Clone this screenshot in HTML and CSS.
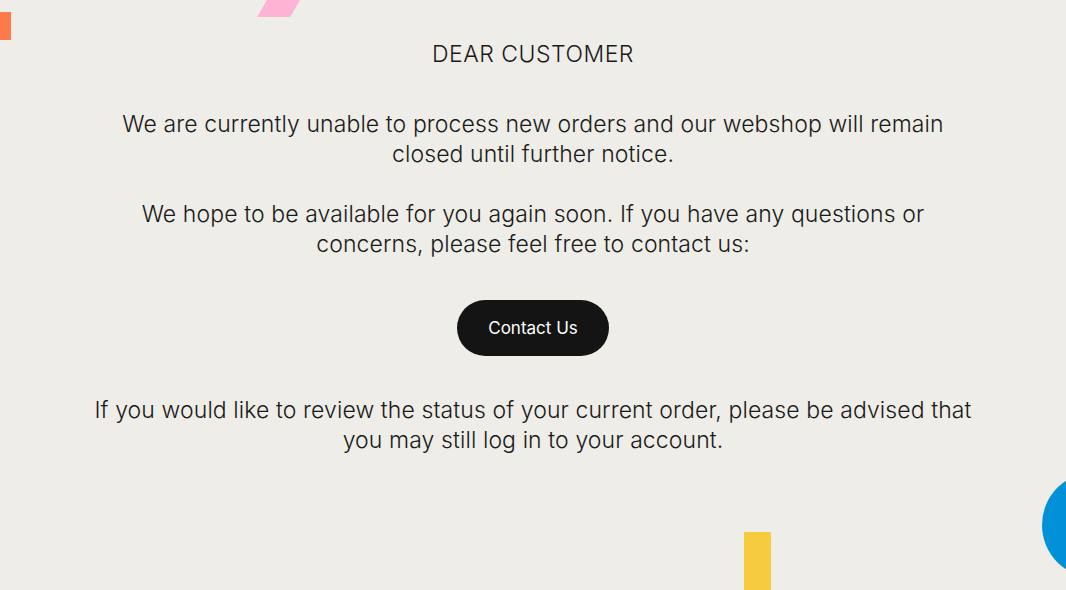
FILE: index.html
```html
<!DOCTYPE html>
<html lang="en">
<head>
  <meta charset="UTF-8" />
  <meta name="viewport" content="width=device-width, initial-scale=1.0" />
  <title>Webshop closed</title>
  <link rel="stylesheet" href="styles.css">
</head>
<body>
  <div class="shape shape-orange"></div>
  <div class="shape shape-pink"></div>
  <div class="shape shape-yellow"></div>
  <div class="shape shape-blue"><div class="circle"></div></div>

  <main class="notice">
    <h1 class="notice-title">Dear Customer</h1>
    <p>We are currently unable to process new orders and our webshop will remain closed until further notice.</p>
    <p>We hope to be available for you again soon. If you have any questions or concerns, please feel free to contact us:</p>
    <a class="btn" href="#">Contact Us</a>
    <p>If you would like to review the status of your current order, please be advised that you may still log in to your account.</p>
  </main>
</body>
</html>
```

FILE: styles.css
```css
body {
  margin: 0;
  height: 590px;
  overflow: hidden;
  background-color: #eeede8;
  color: #1a1a1a;
  font-family: Inter, 'Noto Sans', sans-serif;
  font-weight: 300;
  position: relative;
}

.notice {
  max-width: 880px;
  margin: 0 auto;
  padding-top: 39px;
  text-align: center;
  display: flex;
  flex-direction: column;
  align-items: center;
}

.notice-title {
  margin: 0 0 40px;
  font-size: 23px;
  font-weight: 300;
  letter-spacing: 0.5px;
  text-transform: uppercase;
  line-height: 30px;
}

.notice p {
  margin: 0 0 30px;
  font-size: 23px;
  letter-spacing: 0.1px;
  line-height: 30px;
}

.btn {
  display: inline-flex;
  align-items: center;
  justify-content: center;
  width: 152px;
  height: 56px;
  margin: 11px 0 39px;
  border-radius: 28px;
  background-color: #141414;
  color: white;
  text-decoration: none;
  font-size: 17px;
  font-weight: 400;
}

.shape {
  position: absolute;
}

.shape-orange {
  left: 0;
  top: 12px;
  width: 11px;
  height: 28px;
  background-color: #ff7a4a;
}

.shape-pink {
  left: 265px;
  top: -10px;
  width: 33px;
  height: 27px;
  background-color: #ffb3d4;
  transform: skewX(-30deg);
}

.shape-yellow {
  left: 744px;
  top: 532px;
  width: 27px;
  height: 58px;
  background-color: #f7cb3e;
}

/* circle mostly off-screen: only its left slice shows */
.shape-blue {
  right: 0;
  top: 472px;
  width: 24px;
  height: 106px;
  overflow: hidden;
}

.circle {
  width: 106px;
  height: 106px;
  border-radius: 50%;
  background-color: #0091d9;
}
```
